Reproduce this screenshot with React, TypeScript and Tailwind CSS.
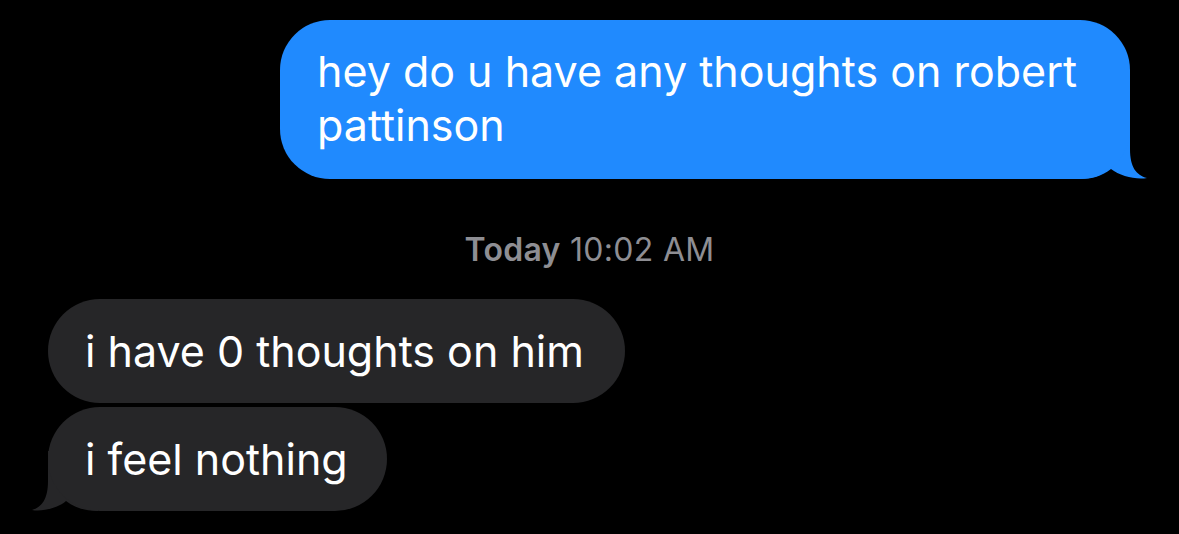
import React from 'react';

const font = { fontFamily: 'Inter, "Noto Sans", sans-serif' };

const SentTail = () => (
  <svg
    className="absolute right-[-17px] bottom-0"
    width="67"
    height="60"
    viewBox="0 0 67 60"
  >
    <path d="M0,0 L50,0 L50,30 C50,48 56,56 67,59 C56,61 40,57 31,50 C22,57 12,60 0,60 Z" fill="#208AFE" />
  </svg>
);

const ReceivedTail = () => (
  <svg
    className="absolute left-[-16px] bottom-0"
    width="66"
    height="60"
    viewBox="0 0 66 60"
  >
    <path d="M66,0 L16,0 L16,30 C16,48 10,56 0,59 C10,61 26,57 34,50 C43,57 54,60 66,60 Z" fill="#262628" />
  </svg>
);

export default function App() {
  return (
    <div className="w-[1179px] h-[534px] bg-black overflow-hidden flex flex-col" style={font}>
      <div className="self-end mr-[49px] mt-[20px] relative">
        <SentTail />
        <div className="relative w-[850px] h-[159px] bg-[#208AFE] rounded-[50px] px-[37px] pt-[24px] text-white text-[43px] leading-[54px]">
          hey do u have any thoughts on robert pattinson
        </div>
      </div>

      <div className="mt-[52px] text-center text-[32px] leading-[38px] text-[#8E8E93] tracking-[0.3px]">
        <span className="font-semibold">Today</span> 10:02 AM
      </div>

      <div className="ml-[48px] mt-[30px] flex flex-col items-start gap-[4px]">
        <div className="h-[104px] bg-[#262628] rounded-[52px] pl-[37px] pr-[41px] flex items-center text-white text-[43px]">
          i have 0 thoughts on him
        </div>
        <div className="relative">
          <ReceivedTail />
          <div className="relative h-[104px] bg-[#262628] rounded-[52px] pl-[37px] pr-[39px] flex items-center text-white text-[43px]">
            i feel nothing
          </div>
        </div>
      </div>
    </div>
  );
}
